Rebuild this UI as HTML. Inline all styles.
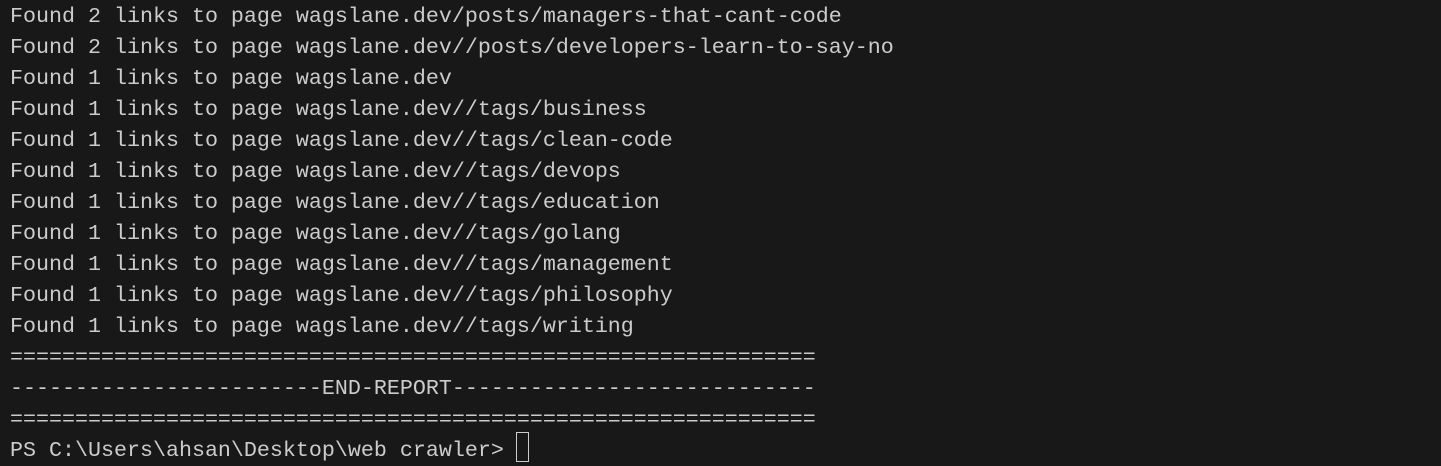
<!DOCTYPE html>
<html><head><meta charset="utf-8"><style>
html,body{margin:0;padding:0;background:#181818;width:1441px;height:465px;overflow:hidden}
pre{margin:0;position:absolute;left:10px;top:1px;font-family:"Liberation Mono",monospace;font-size:21.67px;line-height:31px;color:#cccccc;white-space:pre}
.cur{position:absolute;left:516px;top:432px;width:11px;height:28px;border:1px solid #cccccc}
</style></head><body>
<pre>Found 2 links to page wagslane.dev/posts/managers-that-cant-code
Found 2 links to page wagslane.dev//posts/developers-learn-to-say-no
Found 1 links to page wagslane.dev
Found 1 links to page wagslane.dev//tags/business
Found 1 links to page wagslane.dev//tags/clean-code
Found 1 links to page wagslane.dev//tags/devops
Found 1 links to page wagslane.dev//tags/education
Found 1 links to page wagslane.dev//tags/golang
Found 1 links to page wagslane.dev//tags/management
Found 1 links to page wagslane.dev//tags/philosophy
Found 1 links to page wagslane.dev//tags/writing
==============================================================
------------------------END-REPORT----------------------------
==============================================================
PS C:\Users\ahsan\Desktop\web crawler&gt; </pre>
<div class="cur"></div>
</body></html>
